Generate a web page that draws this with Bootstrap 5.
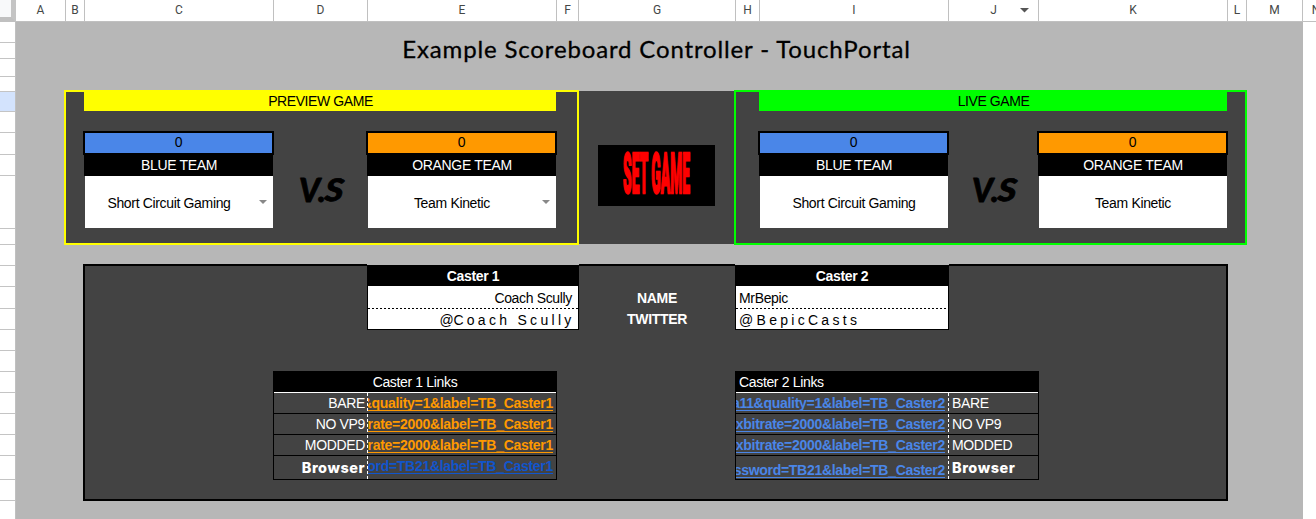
<!DOCTYPE html>
<html lang="en">
<head>
<meta charset="utf-8">
<title>Scoreboard Controller</title>
<link href="https://cdn.jsdelivr.net/npm/bootstrap@5.3.0/dist/css/bootstrap.min.css" rel="stylesheet">
<style>
:root{--rest:19px 189px 94px 189px 22px 157px 24px 189px 90px 189px 19px;--cols:49px var(--rest) 57px}
body{font-family:"Liberation Sans",Arial,sans-serif;font-size:14px;letter-spacing:-.34px;line-height:20px;height:519px;overflow:hidden;background:#fff;color:#000}
.corner{width:16px;height:22px;background:#f8f9fa;border:solid #c0c0c0;border-width:0 5px 5px 0;border-right-color:#c4c4c4}
.colbar{display:grid;grid-template-columns:50px var(--rest) 56px 27px;height:22px;width:1300px;border-bottom:1px solid #c0c0c0;font:12px/20px Roboto,sans-serif;letter-spacing:0;color:#444746;text-align:center}
.colbar>div{border-right:1px solid #c0c0c0;position:relative}
.colbar svg{position:absolute;right:9px;top:8px}
.rowbar{width:16px;border-right:1px solid #c0c0c0;display:grid;grid-template-rows:21px 16px 18px 15px 20px 21px 22px 21px 53px 16px 21px 21px 22px 21px 21px 21px 21px 21px 21px 21px 24px 21px 19px}
.rowbar>div{border-bottom:1px solid #c4c4c4}
.rowbar>.picked{background:#d3e3fd}
.sheet{display:grid;grid-template-columns:var(--cols);grid-template-rows:69px 20px 21px 22px 21px 53px 16px 21px 21px 22px 21px 42px 21px 21px 21px 21px 24px 21px 19px;background:#b7b7b7;width:1287px}
.sheet>*{min-width:0;min-height:0;white-space:pre}
.cC{grid-column:3}.cD{grid-column:4}.cE{grid-column:5}.cG{grid-column:7}.cI{grid-column:9}.cJ{grid-column:10}.cK{grid-column:11}
.cCE{grid-column:3/6}.cIK{grid-column:9/12}.cEF{grid-column:5/7}.cHI{grid-column:8/10}.cDE{grid-column:4/6}.cHJ{grid-column:8/11}
.title-cell{grid-area:1/1/2/14;font:400 24px/30px Lato,sans-serif;letter-spacing:.85px;-webkit-text-stroke:.3px #000;padding:12px 6px 0 0;text-align:center}
.dark{background:#434343}
.board{grid-row:2/8;margin:-1px;border:2px solid}
.preview{grid-column:2/7;border-color:#ff0}.live{grid-column:8/13;border-color:#0f0}
.middle{grid-area:2/7/8/8;margin-left:1px;margin-right:1px}
.band{grid-row:2;z-index:1;padding-left:1px;line-height:21px;letter-spacing:-.42px}
.band-yellow{background:#ff0}.band-green{background:#0f0}
.score{grid-row:4;margin:-1px;border:2px solid #000;z-index:1;line-height:19px}
.bg-blue{background:#4a86e8}.bg-orange{background:#f90}
.team{grid-row:5;background:#000;color:#fff;margin-bottom:-1px;z-index:1;line-height:23px;padding-left:1px}
.pick{grid-row:6;background:#fff;margin:1px 0 0 1px;position:relative;padding-top:1px}
.pick.menu{padding-right:20px}
.pick svg{position:absolute;right:6px;top:24px}
.versus{grid-row:5/7}
.setgame{grid-row:4/8;justify-self:center;margin:13px 0 0 0;width:117px;height:61px}
.setgame,.versus{letter-spacing:0}
.lower{grid-column:3/12;grid-row:8/19;height:237px;margin:-1px;border:2px solid #000;align-self:end}
.caster{grid-row:9/12;border:1px solid #000;border-top:0;background:#fff;margin:0 -1px -1px 0;display:grid;grid-template-rows:21px 23px 20px;z-index:1;box-shadow:0 -1px #b7b7b7}
.caster>:nth-child(1){background:#000;color:#fff;font-weight:700;text-align:center;line-height:23px}
.caster>:nth-child(2){padding:1px 6px 0 3px;line-height:23px;background:repeating-linear-gradient(90deg,#000 0 2px,#fff 2px 4px) bottom/100% 1px no-repeat}
.caster>:nth-child(3){padding:0 6px 0 3px;line-height:22px;letter-spacing:-.3px}
.caster.text-end>:nth-child(3){padding-right:7px}
.caplabel{color:#fff;font-weight:700;text-align:center;padding-left:1px}
.r10{grid-row:10;line-height:25px}.r11{grid-row:11;line-height:23px}
.links{grid-row:13/18;border:1px solid #000;margin:0 -1px -1px 0;display:grid;grid-template-rows:20px 21px 21px 21px 24px;color:#fff}
.l1{grid-template-columns:94px 188px}.l2{grid-template-columns:212px 90px}
.lhead{grid-column:1/3;background:#000;line-height:21px;padding-left:3px}
.lhead.text-center{padding-left:0}
.links>:not(.lhead){border-top:1px solid #000;line-height:21px;overflow:hidden}
.links>.top{border-top-color:#fff}
.name{padding:0 3px 0 3px}
.l1 .name{background:repeating-linear-gradient(#fff 0 3px,#434343 3px 5px) right/1px 100% no-repeat}
.l2 .name{background:repeating-linear-gradient(#fff 0 3px,#434343 3px 5px) left/1px 100% no-repeat;padding-left:4px}
.url{display:flex;justify-content:flex-end;padding-right:3px;font-weight:700;text-decoration:underline;text-decoration-thickness:1px;text-underline-offset:2px;text-decoration-skip-ink:none;letter-spacing:-.29px}
.l1 .url{color:#f90}.l2 .url{color:#4a86e8}.l1 .url.visited-blue{color:#1155cc}
.links>.wide{font:800 14.5px/24px Inter,sans-serif;letter-spacing:.5px}
</style>
<script src="https://cdn.jsdelivr.net/npm/bootstrap@5.3.0/dist/js/bootstrap.bundle.min.js"></script>
</head>
<body>
<div class="d-flex">
  <div class="corner flex-shrink-0"></div>
  <div class="colbar flex-shrink-0"><div>A</div><div>B</div><div>C</div><div>D</div><div>E</div><div>F</div><div>G</div><div>H</div><div>I</div><div>J<svg width="9" height="5"><path d="M0 0h9L4.500 4.500z" fill="#555"/></svg></div><div>K</div><div>L</div><div>M</div><div>N</div></div>
</div>
<div class="d-flex">
  <div class="rowbar flex-shrink-0"><div></div><div></div><div></div><div></div><div class="picked"></div><div></div><div></div><div></div><div></div><div></div><div></div><div></div><div></div><div></div><div></div><div></div><div></div><div></div><div></div><div></div><div></div><div></div><div></div></div>
  <main class="sheet flex-shrink-0">
    <div class="title-cell">Example Scoreboard Controller - TouchPortal</div>
    <div class="dark middle"></div>
    <div class="dark board preview"></div>
    <div class="dark board live"></div>

    <div class="band band-yellow cCE text-center">PREVIEW GAME</div>
    <div class="score bg-blue cC text-center">0</div>
    <div class="team cC text-center">BLUE TEAM</div>
    <div class="pick menu cC d-flex align-items-center justify-content-center">Short Circuit Gaming<svg width="8" height="4"><path d="M0 0h8L4 4z" fill="#888"/></svg></div>
    <svg class="versus cD" width="94" height="74" font-family="Lato" font-weight="900" font-style="italic" stroke="#000" stroke-width=".8" stroke-linejoin="round"><text font-size="32" transform="translate(0 48)"><tspan x="26">V</tspan><tspan x="45">.</tspan></text><text font-size="31" transform="translate(51 47) skewX(-6) scale(1.15 1)">S</text></svg>
    <div class="score bg-orange cE text-center">0</div>
    <div class="team cE text-center">ORANGE TEAM</div>
    <div class="pick menu cE d-flex align-items-center justify-content-center">Team Kinetic<svg width="8" height="4"><path d="M0 0h8L4 4z" fill="#888"/></svg></div>

    <svg class="setgame cG" width="117" height="61"><rect width="117" height="61"/><text transform="translate(25 48) scale(1 2.6)" font-family="Roboto" font-weight="900" font-size="21.500" textLength="67" lengthAdjust="spacingAndGlyphs" fill="red" stroke="red" stroke-width=".9">SET GAME</text></svg>

    <div class="band band-green cIK text-center">LIVE GAME</div>
    <div class="score bg-blue cI text-center">0</div>
    <div class="team cI text-center">BLUE TEAM</div>
    <div class="pick cI d-flex align-items-center justify-content-center">Short Circuit Gaming</div>
    <svg class="versus cJ" width="90" height="74" font-family="Lato" font-weight="900" font-style="italic" stroke="#000" stroke-width=".8" stroke-linejoin="round"><text font-size="32" transform="translate(0 48)"><tspan x="24">V</tspan><tspan x="43">.</tspan></text><text font-size="31" transform="translate(49 47) skewX(-6) scale(1.15 1)">S</text></svg>
    <div class="score bg-orange cK text-center">0</div>
    <div class="team cK text-center">ORANGE TEAM</div>
    <div class="pick cK d-flex align-items-center justify-content-center">Team Kinetic</div>

    <div class="dark lower"></div>
    <div class="caster cEF text-end"><div>Caster 1</div><div>Coach Scully</div><div>@C o a c h   S c u l l y</div></div>
    <div class="caplabel cG r10">NAME</div>
    <div class="caplabel cG r11">TWITTER</div>
    <div class="caster cHI"><div>Caster 2</div><div>MrBepic</div><div>@ B e p i c C a s t s</div></div>

    <div class="links l1 cDE">
      <div class="lhead text-center">Caster 1 Links</div>
      <div class="name top text-end">BARE</div><div class="url top">&amp;quality=1&amp;label=TB_Caster1</div>
      <div class="name text-end">NO VP9</div><div class="url">trate=2000&amp;label=TB_Caster1</div>
      <div class="name text-end">MODDED</div><div class="url">trate=2000&amp;label=TB_Caster1</div>
      <div class="name text-end wide">Browser</div><div class="url visited-blue">ord=TB21&amp;label=TB_Caster1</div>
    </div>
    <div class="links l2 cHJ">
      <div class="lhead">Caster 2 Links</div>
      <div class="url top">a11&amp;quality=1&amp;label=TB_Caster2</div><div class="name top">BARE</div>
      <div class="url">xbitrate=2000&amp;label=TB_Caster2</div><div class="name">NO VP9</div>
      <div class="url">xbitrate=2000&amp;label=TB_Caster2</div><div class="name">MODDED</div>
      <div class="url pt-1">ssword=TB21&amp;label=TB_Caster2</div><div class="name wide">Browser</div>
    </div>
  </main>
</div>
</body>
</html>
